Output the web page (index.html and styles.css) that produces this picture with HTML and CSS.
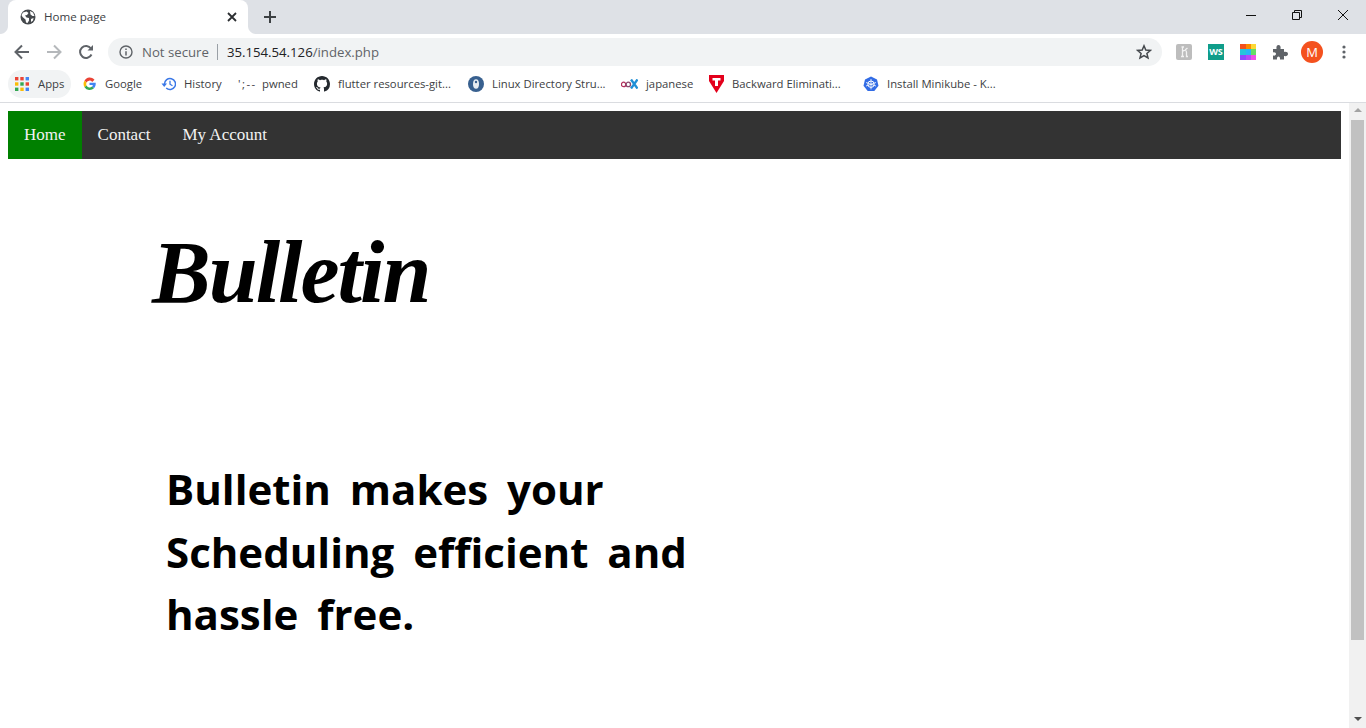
FILE: index.html
```html
<!DOCTYPE html>
<html>

    <head>
        <meta charset="UTF-8">
        <title>Home page</title>
        <link rel="stylesheet" href="styles.css">
    </head>
    <body>
        <div class="tabstrip">
            <div class="tab">
                <svg class="tab-globe" width="16" height="16" viewBox="0 0 16 16"><circle cx="8" cy="8" r="7.500" fill="#45494d"/><path d="M3 3.500 6.500 2.500 8.500 4 7 6 5 6.500 6.500 8.500 9 9 9 11.500 7.500 14 6 13.500 5.500 10.500 2.500 8 1.500 6ZM10 2 13 3.500 14.500 7 12.500 7 10.500 5.500ZM11 10 13.500 9 13 11.500 11 13Z" fill="#fff"/></svg>
                <span class="tab-title">Home page</span>
                <svg class="tab-close" width="10" height="10" viewBox="0 0 10 10"><path d="M1 1 9 9M9 1 1 9" stroke="#2b2e31" stroke-width="1.800"/></svg>
            </div>
            <svg class="new-tab" width="14" height="14" viewBox="0 0 14 14"><path d="M7 1V13M1 7H13" stroke="#3c4043" stroke-width="2"/></svg>
            <div class="win-btns">
                <svg width="12" height="12" viewBox="0 0 12 12"><path d="M1 6.500H11" stroke="#111" stroke-width="1"/></svg>
                <svg width="12" height="12" viewBox="0 0 12 12"><path d="M1.500 3.500H8.500V10.500H1.500ZM3.500 3.500V1.500H10.500V8.500H8.500" fill="none" stroke="#111" stroke-width="1"/></svg>
                <svg width="12" height="12" viewBox="0 0 12 12"><path d="M1 1 11 11M11 1 1 11" stroke="#111" stroke-width="1"/></svg>
            </div>
        </div>

        <div class="toolbar">
            <svg class="nav-icon" width="16" height="16" viewBox="0 0 16 16"><path d="M15 8H2M8 1.500 1.500 8 8 14.500" fill="none" stroke="#5f6368" stroke-width="2"/></svg>
            <svg class="nav-icon" width="16" height="16" viewBox="0 0 16 16"><path d="M1 8H14M8 1.500 14.500 8 8 14.500" fill="none" stroke="#b5b8bb" stroke-width="2"/></svg>
            <svg class="nav-icon" width="16" height="16" viewBox="0 0 16 16"><path d="M13.500 10.500A6 6 0 1 1 13 4.500" fill="none" stroke="#5f6368" stroke-width="2"/><path d="M9.500 6.500H15V1Z" fill="#5f6368"/></svg>
            <div class="omnibox">
                <svg class="info-icon" width="14" height="14" viewBox="0 0 14 14"><circle cx="7" cy="7" r="6" fill="none" stroke="#5f6368" stroke-width="1.400"/><path d="M7 6.200V10.400M7 3.600V5" stroke="#5f6368" stroke-width="1.500"/></svg>
                <span class="not-secure">Not secure</span>
                <span class="omni-sep"></span>
                <span class="url"><span class="url-host">35.154.54.126</span>/index.php</span>
                <svg class="star" width="16" height="16" viewBox="0 0 16 16"><path d="M8 1.800 9.800 6 14.400 6.400 10.900 9.400 12 13.900 8 11.500 4 13.900 5.100 9.400 1.600 6.400 6.200 6Z" fill="none" stroke="#45494d" stroke-width="1.500"/></svg>
            </div>
            <div class="ext-icons">
                <svg width="16" height="16" viewBox="0 0 16 16"><rect width="16" height="16" rx="2" fill="#bdbdbd"/><path d="M5.500 3H8M6.500 3V12.500M5 12.500H8M6.500 7.500C8 6 10.500 6 10.500 8L10.500 12.500H12M9 6 11.500 4" fill="none" stroke="#f2f2f2" stroke-width="1.300"/></svg>
                <span class="ext-ws">WS</span>
                <svg width="16" height="16" viewBox="0 0 16 16"><rect width="6" height="5" fill="#f4511e"/><rect x="6" width="5" height="5" fill="#fb8c00"/><rect x="11" width="5" height="5" fill="#fdd835"/><rect y="5" width="6" height="6" fill="#26c6da"/><rect x="6" y="5" width="5" height="6" fill="#29b6f6"/><rect x="11" y="5" width="5" height="6" fill="#66dd66"/><rect y="11" width="6" height="5" fill="#8c4bff"/><rect x="6" y="11" width="5" height="5" fill="#b44cf5"/><rect x="11" y="11" width="5" height="5" fill="#f050e8"/></svg>
                <svg width="16" height="16" viewBox="0 0 16 16"><path d="M1 5H4.500C4 2.500 5 1 6.500 1S9 2.500 8.500 5H12V8C14.500 7.500 16 8.500 16 10S14.500 12.500 12 12V15.500H8C8.300 13.500 7.500 12.500 6.500 12.500S4.700 13.500 5 15.500H1V11.500C3 12 4 11 4 10S3 8 1 8.500Z" fill="#5f6368"/></svg>
                <span class="avatar">M</span>
                <svg width="16" height="16" viewBox="0 0 16 16"><circle cx="8" cy="3" r="1.600" fill="#5f6368"/><circle cx="8" cy="8" r="1.600" fill="#5f6368"/><circle cx="8" cy="13" r="1.600" fill="#5f6368"/></svg>
            </div>
        </div>

        <div class="bookmarks">
            <div class="bm bm-apps">
                <svg width="14" height="14" viewBox="0 0 14 14">
                    <rect width="3.400" height="3.400" fill="#ea4335"/><rect x="5.300" width="3.400" height="3.400" fill="#ea4335"/><rect x="10.600" width="3.400" height="3.400" fill="#4285f4"/>
                    <rect y="5.300" width="3.400" height="3.400" fill="#fbbc05"/><rect x="5.300" y="5.300" width="3.400" height="3.400" fill="#34a853"/><rect x="10.600" y="5.300" width="3.400" height="3.400" fill="#ea4335"/>
                    <rect y="10.600" width="3.400" height="3.400" fill="#34a853"/><rect x="5.300" y="10.600" width="3.400" height="3.400" fill="#fbbc05"/><rect x="10.600" y="10.600" width="3.400" height="3.400" fill="#4285f4"/>
                </svg>
                <span>Apps</span>
            </div>
            <div class="bm">
                <svg width="15" height="14" viewBox="0 0 14 14"><path d="M12 2.800A6 6 0 0 0 2 3.800L4 5.500A3.400 3.400 0 0 1 9.700 4.900Z" fill="#ea4335"/><path d="M2 3.800A6.200 6.200 0 0 0 2 10.200L4 8.500A3.400 3.400 0 0 1 4 5.500Z" fill="#fbbc05"/><path d="M2 10.200A6.200 6.200 0 0 0 11.500 11.200L9.500 9.500A3.400 3.400 0 0 1 4 8.500Z" fill="#34a853"/><path d="M7 5.800H13.200C13.500 8 12.800 10 11.500 11.200L9.500 9.500C10 9.100 10.300 8.600 10.400 8H7Z" fill="#4285f4"/></svg>
                <span>Google</span>
            </div>
            <div class="bm">
                <svg width="15" height="14" viewBox="0 0 15 14"><path d="M3.500 7A5.500 5.500 0 1 1 5.200 11" fill="none" stroke="#3b78e7" stroke-width="1.500"/><path d="M0.500 6.500H6L3.200 10Z" fill="#3b78e7"/><path d="M9 3.800V7.200L11.500 8.700" fill="none" stroke="#3b78e7" stroke-width="1.300"/></svg>
                <span>History</span>
            </div>
            <div class="bm">
                <span class="pwned-mark">';--</span>
                <span>pwned</span>
            </div>
            <div class="bm">
                <svg width="16" height="16" viewBox="0 0 16 16"><path d="M8 0C3.580 0 0 3.580 0 8c0 3.540 2.290 6.530 5.470 7.590.4.070.55-.17.55-.38 0-.19-.01-.82-.01-1.490-2.010.37-2.530-.49-2.690-.94-.09-.23-.48-.94-.82-1.130-.28-.15-.68-.52-.01-.53.630-.01 1.080.58 1.230.82.720 1.210 1.870.87 2.330.66.070-.52.280-.87.510-1.070-1.780-.2-3.640-.89-3.640-3.950 0-.87.310-1.590.82-2.150-.08-.2-.36-1.020.08-2.120 0 0 .67-.21 2.200.82.640-.18 1.320-.27 2-.27s1.360.09 2 .27c1.530-1.040 2.200-.82 2.200-.82.440 1.100.16 1.920.08 2.120.51.56.82 1.270.82 2.150 0 3.070-1.870 3.750-3.650 3.950.29.25.54.73.54 1.480 0 1.070-.01 1.930-.01 2.200 0 .21.150.46.550.38A8.010 8.010 0 0 0 16 8c0-4.420-3.580-8-8-8Z" fill="#24292e"/></svg>
                <span>flutter resources-git...</span>
            </div>
            <div class="bm">
                <svg width="16" height="16" viewBox="0 0 16 16"><circle cx="8" cy="8" r="8" fill="#38608f"/><ellipse cx="8" cy="8" rx="3" ry="4.800" fill="#e8edf2"/><circle cx="8" cy="6" r="1.200" fill="#38608f"/></svg>
                <span>Linux Directory Stru...</span>
            </div>
            <div class="bm">
                <svg width="17" height="10" viewBox="0 0 17 10"><circle cx="2.600" cy="5.400" r="2.200" fill="none" stroke="#b0305c" stroke-width="1.300"/><circle cx="7.300" cy="5.400" r="2.200" fill="none" stroke="#8a4a70" stroke-width="1.300"/><path d="M10 .5 16.500 9.500M16.500 .5 10 9.500" stroke="#1f8fd6" stroke-width="2.400"/></svg>
                <span>japanese</span>
            </div>
            <div class="bm">
                <svg width="15" height="18" viewBox="0 0 15 18"><path d="M0 0H15V6L7.500 18 0 6Z" fill="#e3001b"/><path d="M3.500 3H11.500V5.500H9V11H6V5.500H3.500Z" fill="#fff"/></svg>
                <span>Backward Eliminati...</span>
            </div>
            <div class="bm">
                <svg width="16" height="16" viewBox="0 0 16 16"><path d="M8 .5 14 3.400 15.500 9.800 11.300 15H4.700L.5 9.800 2 3.400Z" fill="#326ce5"/><circle cx="8" cy="8.200" r="3.200" fill="none" stroke="#fff" stroke-width="1"/><path d="M8 3V13.400M3 6.500 13 10M13 6.500 3 10" stroke="#fff" stroke-width=".8"/></svg>
                <span>Install Minikube - K...</span>
            </div>
        </div>

        <div class="viewport">
            <div class="page">
                <ul class="menu">
                    <li class="active">Home</li>
                    <li>Contact</li>
                    <li>My Account</li>
                </ul>
                <h1 class="logo">Bulletin</h1>
                <p class="tagline">Bulletin makes your<br>Scheduling efficient and<br>hassle free.</p>
            </div>
            <div class="scrollbar">
                <div class="arrow-up"></div>
                <div class="thumb"></div>
                <div class="arrow-down"></div>
            </div>
        </div>
    </body>

</html>
```

FILE: styles.css
```css
* {
    padding: 0;
    margin: 0;
    box-sizing: border-box;
}

html,
body {
    height: 100%;
    overflow: hidden;
}

body {
    background-color: #fff;
    font-family: "Open Sans", "Liberation Sans", sans-serif;
    display: flex;
    flex-direction: column;
}

/* browser chrome */
.tabstrip {
    height: 34px;
    background-color: #dee1e6;
    display: flex;
    align-items: flex-end;
    padding-left: 8px;
}

.tab {
    position: relative;
    width: 240px;
    height: 34px;
    background-color: #fff;
    border-radius: 8px 8px 0 0;
    display: flex;
    align-items: center;
    padding: 0 11px 0 12px;
}

/* the little flares at the foot of the tab */
.tab::before,
.tab::after {
    content: "";
    position: absolute;
    bottom: 0;
    width: 8px;
    height: 8px;
}

.tab::before {
    left: -8px;
    background: radial-gradient(circle at 0 0, #dee1e6 7.500px, #fff 8.500px);
}

.tab::after {
    right: -8px;
    background: radial-gradient(circle at 100% 0, #dee1e6 7.500px, #fff 8.500px);
}

.tab-title {
    flex: 1;
    margin: 0 0 2px 8px;
    font-size: 11.600px;
    color: #3c4043;
}

.new-tab {
    margin: 0 0 10px 15px;
}

.win-btns {
    margin-left: auto;
    align-self: flex-start;
    display: flex;
    gap: 34px;
    padding: 9px 17px 0 0;
}

.toolbar {
    height: 34px;
    padding: 1px 0 0 14px;
    background-color: #fff;
    display: flex;
    align-items: center;
}

.nav-icon {
    margin-right: 16px;
}

.omnibox {
    width: 1054px;
    height: 28px;
    margin-left: -2px;
    background-color: #f1f3f4;
    border-radius: 14px;
    display: flex;
    align-items: center;
    padding: 0 10px 0 11px;
    font-size: 13.200px;
}

.not-secure {
    margin-left: 9px;
    color: #5f6368;
}

.omni-sep {
    width: 1px;
    height: 16px;
    margin: 0 9px 0 8px;
    background-color: #9aa0a6;
}

.url {
    flex: 1;
    color: #5f6368;
}

.url-host {
    color: #202124;
}

.ext-icons {
    display: flex;
    align-items: center;
    gap: 16px;
    margin-left: 14px;
}

.ext-ws {
    width: 16px;
    height: 16px;
    background-color: #0f9d8a;
    color: #fff;
    font-size: 9px;
    font-weight: 700;
    line-height: 16px;
    text-align: center;
}

.avatar {
    width: 22px;
    height: 22px;
    margin: 0 -3px;
    border-radius: 50%;
    background-color: #f4511e;
    color: #fff;
    font-size: 13px;
    line-height: 22px;
    text-align: center;
}

.bookmarks {
    height: 35px;
    padding: 0 0 2px 8px;
    border-bottom: 1px solid #dadce0;
    background-color: #fff;
    display: grid;
    grid-template-columns: 74px 79px 77px 76px 154px 153px 88px 154px 150px;
    align-items: center;
    font-size: 11.300px;
    color: #3c4043;
}

.bm {
    display: flex;
    align-items: center;
    gap: 8px;
    white-space: nowrap;
}

.bm span {
    margin-bottom: 2px;
}

.bm-apps {
    width: 63px;
    height: 28px;
    padding-left: 7px;
    border-radius: 14px;
    background-color: #f1f3f4;
    gap: 9px;
}

.pwned-mark {
    width: 16px;
    letter-spacing: 1.500px;
}

/* page */
.viewport {
    flex: 1;
    display: flex;
    min-height: 0;
}

.page {
    flex: 1;
    padding: 8px 8px 0;
    font-family: "Liberation Serif", serif;
}

.menu {
    height: 48px;
    background-color: #333;
    list-style: none;
    display: flex;
}

.menu li {
    padding: 0 16px;
    line-height: 48px;
    font-size: 17px;
    color: #f2f2f2;
}

.menu .active {
    background-color: green;
}

.logo {
    margin: 54px 0 0 144px;
    font-family: "Liberation Serif", serif;
    font-style: italic;
    font-size: 88px;
    font-weight: 700;
    line-height: 120px;
    letter-spacing: -2px;
}

.tagline {
    margin: 125px 0 0 158px;
    font-family: "Open Sans", sans-serif;
    font-size: 42px;
    font-weight: 700;
    line-height: 62.500px;
    font-variant-ligatures: none;
    word-spacing: 8px;
    color: #000;
}

.scrollbar {
    width: 17px;
    background-color: #f1f1f1;
    display: flex;
    flex-direction: column;
    align-items: center;
}

.arrow-up {
    margin-top: 5px;
    border: 4px solid transparent;
    border-top: 0;
    border-bottom-color: #a3a3a3;
}

.thumb {
    width: 13px;
    height: 520px;
    margin-top: 8px;
    background-color: #c1c1c1;
}

.arrow-down {
    margin-top: auto;
    margin-bottom: 7px;
    border: 4px solid transparent;
    border-bottom: 0;
    border-top-color: #505050;
}
```
